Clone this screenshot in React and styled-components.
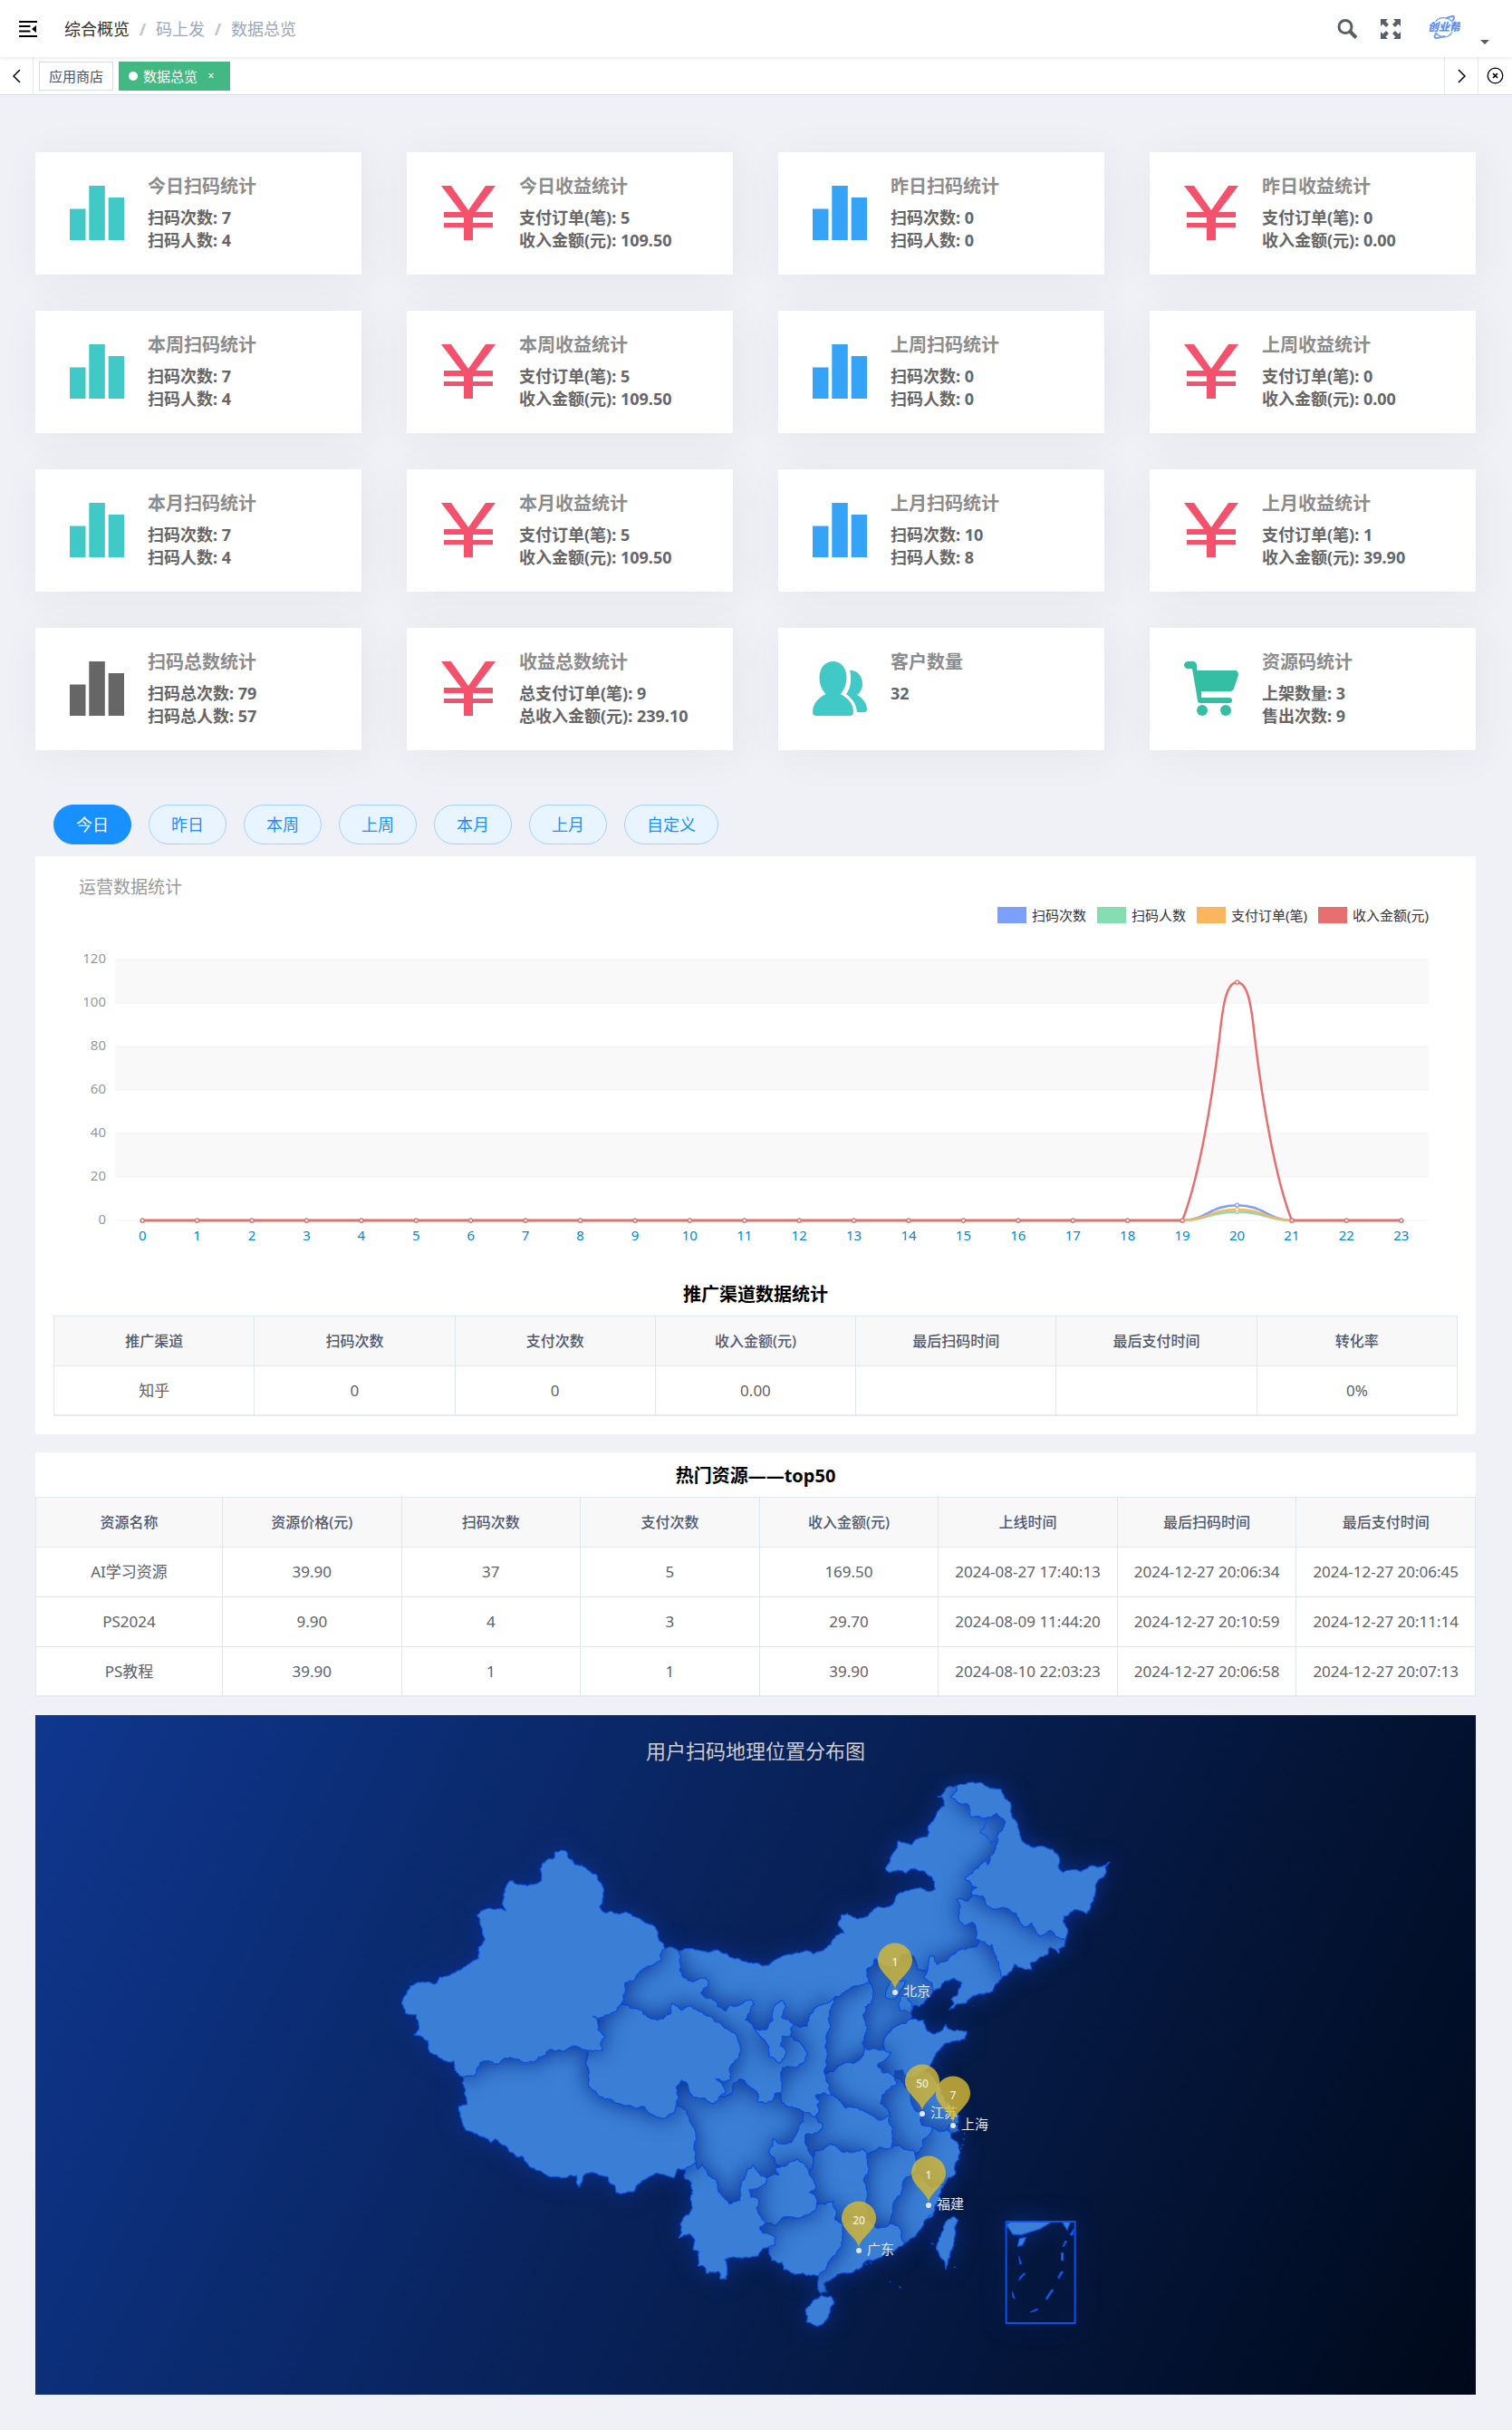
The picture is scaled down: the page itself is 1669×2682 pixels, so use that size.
import React from "react";
import styled, { createGlobalStyle } from "styled-components";

const GlobalStyle = createGlobalStyle`
  *, *::before, *::after { box-sizing: border-box; }
  body {
    margin: 0;
    background: #f0f1f6;
    color: #606266;
    font-family: "Noto Sans", "Noto Sans CJK SC", sans-serif;
    font-size: 17px;
    line-height: 24px;
  }
  h2, h3, p, ul, ol { margin: 0; padding: 0; }
  ul, ol { list-style: none; }
  button { font: inherit; margin: 0; padding: 0; border: 0; background: none; cursor: pointer; }
  a { color: inherit; text-decoration: none; }
  svg { display: block; }
`;

/* ---------- header ---------- */

const TopBar = styled.header`
  position: relative;
  display: flex;
  align-items: center;
  justify-content: space-between;
  height: 63px;
  padding: 0 25px 0 20px;
  background: #fff;
  box-shadow: 0 1px 5px rgba(0, 21, 41, 0.1);
`;

const TopLeft = styled.div`
  display: flex;
  align-items: center;
  gap: 29px;
`;

const TopRight = styled.div`
  display: flex;
  align-items: center;
  height: 100%;
  gap: 26px;
`;

const IconButton = styled.button`
  display: flex;
  align-items: center;
  justify-content: center;
  color: ${(p) => p.$color || "#5a5e66"};
`;

const Crumbs = styled.ol`
  display: flex;
  align-items: center;
  font-size: 18px;
`;

const Crumb = styled.li`
  display: flex;
  color: ${(p) => (p.$root ? "#303133" : "#97a8be")};
  &:not(:first-child)::before {
    content: "/";
    width: 9px;
    margin: 0 10px;
    color: #c0c4cc;
    font-weight: 700;
    text-align: center;
  }
`;

const UserMenu = styled.button`
  display: flex;
  align-items: flex-end;
  gap: 22px;
  height: 34px;
  margin-left: 4px;
`;

const Caret = styled.span`
  border: 5px solid transparent;
  border-top-color: #5a5e66;
  border-bottom-width: 0;
`;

const TagBar = styled.nav`
  display: flex;
  align-items: stretch;
  height: 42px;
  padding-right: 1px;
  background: #fff;
  border-bottom: 1px solid #d8dce5;
`;

const TagArrow = styled.button`
  display: flex;
  align-items: center;
  justify-content: center;
  width: 37px;
  color: #000;
  border-right: ${(p) => (p.$start ? "1px solid #e8e8ec" : 0)};
  border-left: ${(p) => (p.$start ? 0 : "1px solid #e8e8ec")};
`;

const Tags = styled.ul`
  display: flex;
  flex: 1;
  align-items: center;
  gap: 6px;
  padding: 0 6px;
`;

const Tag = styled.li`
  display: flex;
  align-items: center;
  height: 32px;
  padding: 0 10px;
  font-size: 15px;
  color: ${(p) => (p.$active ? "#fff" : "#495060")};
  background: ${(p) => (p.$active ? "#42b983" : "#fff")};
  border: 1px solid ${(p) => (p.$active ? "#42b983" : "#d8dce5")};
`;

const TagDot = styled.span`
  width: 10px;
  height: 10px;
  margin-right: 6px;
  border-radius: 50%;
  background: #fff;
`;

const TagClose = styled.button`
  width: 20px;
  margin-left: 5px;
  color: #fff;
  font-size: 12px;
  line-height: 20px;
`;

/* ---------- statistics cards ---------- */

const Content = styled.main`
  padding: 63px 40px 39px 39px;
`;

const CardGrid = styled.section`
  display: grid;
  grid-template-columns: repeat(4, minmax(0, 1fr));
  gap: 40px 50px;
`;

const Card = styled.article`
  display: flex;
  gap: 26px;
  min-height: 135px;
  padding: 25px 16px 25px 38px;
  background: #fff;
  box-shadow: 5px 5px 50px rgba(0, 0, 0, 0.05);
`;

const CardIcon = styled.svg`
  flex: none;
  width: 60px;
  height: 60px;
  margin-top: 12px;
  fill: ${(p) => p.$color};
`;

const CardTitle = styled.h3`
  margin-bottom: 9px;
  color: #8c8c8c;
  font-size: 20px;
  line-height: 26px;
`;

const CardLine = styled.p`
  color: #666;
  font-size: 18px;
  font-weight: 700;
  line-height: 25px;
`;

/* ---------- period switch ---------- */

const Periods = styled.div`
  display: flex;
  gap: 19px;
  margin: 60px 20px 13px;
`;

const Period = styled.button`
  height: 44px;
  padding: 0 24px;
  border: 1px solid ${(p) => (p.$active ? "#1890ff" : "#a3d3ff")};
  border-radius: 22px;
  background: ${(p) => (p.$active ? "#1890ff" : "#e8f4ff")};
  color: ${(p) => (p.$active ? "#fff" : "#1890ff")};
  font-size: 18px;
`;

/* ---------- panels ---------- */

const Panel = styled.section`
  margin-bottom: 20px;
  background: #fff;
  overflow: hidden;
`;

const ChartTitle = styled.h2`
  padding: 22px 48px 10px;
  color: #999;
  font-size: 19px;
  font-weight: 400;
  line-height: 24px;
`;

const Legend = styled.ul`
  display: flex;
  justify-content: flex-end;
  gap: 12px;
  padding: 0 52px 1px 0;
  color: #333;
  font-size: 15px;
  line-height: 18px;
`;

const LegendItem = styled.li`
  display: flex;
  gap: 6px;
  &::before {
    content: "";
    width: 32px;
    background: ${(p) => p.$color};
  }
`;

const ChartSvg = styled.svg`
  width: 100%;
  height: auto;
  font-size: 15px;
`;

const TableTitle = styled.h2`
  padding: ${(p) => (p.$flush ? "12px 0 9px" : "25px 0 9px")};
  color: #000;
  font-size: 20px;
  line-height: 28px;
  text-align: center;
`;

const TableFrame = styled.div`
  padding: ${(p) => (p.$flush ? "0" : "0 20px 20px")};
`;

const Table = styled.table`
  width: 100%;
  table-layout: fixed;
  border-spacing: 0;
  border-top: 1px solid #dfe6ec;
  border-left: 1px solid #dfe6ec;
  text-align: center;

  th, td {
    height: 55px;
    padding: 0 10px;
    border-right: 1px solid #dfe6ec;
    border-bottom: 1px solid #dfe6ec;
  }
  th {
    background: #f8f8f9;
    color: #515a6e;
    font-size: 16px;
    font-weight: 500;
  }
  tbody tr:last-child td { border-bottom: 2px solid #e6ebf5; }
`;

const FirstCol = styled.col`
  width: ${(p) => p.$width};
`;

const MapPanel = styled.section`
  background: linear-gradient(115deg, #0f378f, #00091a);
  overflow: hidden;
`;

const MapTitle = styled.h2`
  padding: 24px 0 10px;
  color: #ccc;
  font-size: 22px;
  font-weight: 400;
  line-height: 30px;
  text-align: center;
`;

const MapSvg = styled.svg`
  width: 100%;
  height: auto;
`;

/* ---------- icons ---------- */

const ICONS = {
  bars: <path d="M0 25.5h17.5V60H0zM21.3 0h17.5v60H21.3zM42.7 13H60v47H42.7z" />,
  yen: (
    <path d="M0 0h11l19 27L49 0h11L38 29h19v6H35v6h22v5H35v14H25V46H3v-5h22v-6H3v-6h19z" />
  ),
  people: (
    <path d="M22.500 0c8 0 15 6 15 18 0 8-3 14-7 18 8 4 14.500 10 14.500 20 0 3-2 4-4 4H4c-2 0-4-1-4-4 0-10 7-16 14.500-20-4-4-7-10-7-18 0-12 7-18 15-18zM41 10c8-1 14 6 14 15 0 5-2 9-6 12 7 4 11 10 11 16 0 2-1 3-3 3h-8c-1-9-5-15-12-20 4-5 5-10 5-16 0-4 0-7-1-10z" />
  ),
  cart: (
    <>
      <path d="M4 0h6c2 0 4 2 4 4v6h42c3 0 4 2 4 5l-5 15c-1 2-2 3-4 3H19v7h31c2 0 3 1 3 3s-1 3-3 3H18c-2 0-3-1-3-3L9 8H4C2 8 0 6 0 4s2-4 4-4z" />
      <circle cx="20" cy="54" r="6" />
      <circle cx="46" cy="54" r="6" />
    </>
  ),
};

const MenuIcon = () => (
  <svg width="22" height="22" viewBox="0 0 22 22" fill="none" stroke="currentColor" strokeWidth="2">
    <path d="M1 3h20M1 8h12.500M1 13.500h12.500M1 19h20" />
    <path d="M20 7v8l-5-4z" fill="currentColor" stroke="none" />
  </svg>
);

const SearchIcon = () => (
  <svg width="22" height="22" viewBox="0 0 22 22" fill="none" stroke="currentColor">
    <circle cx="9" cy="8.500" r="7" strokeWidth="3" />
    <path d="M14 13.500l7 7" strokeWidth="4" />
  </svg>
);

const ExpandIcon = () => (
  <svg width="22" height="22" viewBox="0 0 22 22" fill="currentColor">
    {[0, 90, 180, 270].map((angle) => (
      <path key={angle} d="M0 0h8L5.500 2.500 9 6 6 9 2.500 5.500 0 8z" transform={`rotate(${angle} 11 11)`} />
    ))}
  </svg>
);

const Chevron = ({ right }) => (
  <svg width="9" height="16" viewBox="0 0 9 16" fill="none" stroke="currentColor" strokeWidth="1.500">
    <path d={right ? "M1 1l7 7-7 7" : "M8 1L1 8l7 7"} />
  </svg>
);

const CloseCircle = () => (
  <svg width="19" height="19" viewBox="0 0 19 19" fill="none" stroke="currentColor" strokeWidth="1.300">
    <circle cx="9.500" cy="9.500" r="8.300" />
    <path d="M7 7l5 5M12 7l-5 5" strokeWidth="1.700" />
  </svg>
);

const LogoSvg = styled.svg`
  align-self: flex-start;
`;

const Logo = () => (
  <LogoSvg width="36" height="30" viewBox="0 0 36 30" role="img" aria-label="创业帮">
    <g fill="none" stroke="#6b9bf8" strokeLinecap="round">
      <path d="M8 10C11 4 21 2 27 9M9 21c5 7 15 6 18-1" strokeWidth="1.300" />
      <path d="M21 5c4-2 8-3 8-1s-1 3-2 5M9 22c-2 3-2 5 1 5s5-1 8-2" strokeWidth="2" />
    </g>
    <text
      x="18"
      y="19"
      textAnchor="middle"
      fontSize="12"
      fontWeight="900"
      fontStyle="italic"
      fill="#5b8ff9"
      stroke="#fff"
      strokeWidth="1.500"
      paintOrder="stroke"
    >
      创业帮
    </text>
  </LogoSvg>
);

/* ---------- data ---------- */

const TEAL = "#40c9c6";
const RED = "#f4516c";
const BLUE = "#36a3f7";

const CARDS = [
  { icon: "bars", color: TEAL, title: "今日扫码统计", lines: ["扫码次数: 7", "扫码人数: 4"] },
  { icon: "yen", color: RED, title: "今日收益统计", lines: ["支付订单(笔): 5", "收入金额(元): 109.50"] },
  { icon: "bars", color: BLUE, title: "昨日扫码统计", lines: ["扫码次数: 0", "扫码人数: 0"] },
  { icon: "yen", color: RED, title: "昨日收益统计", lines: ["支付订单(笔): 0", "收入金额(元): 0.00"] },
  { icon: "bars", color: TEAL, title: "本周扫码统计", lines: ["扫码次数: 7", "扫码人数: 4"] },
  { icon: "yen", color: RED, title: "本周收益统计", lines: ["支付订单(笔): 5", "收入金额(元): 109.50"] },
  { icon: "bars", color: BLUE, title: "上周扫码统计", lines: ["扫码次数: 0", "扫码人数: 0"] },
  { icon: "yen", color: RED, title: "上周收益统计", lines: ["支付订单(笔): 0", "收入金额(元): 0.00"] },
  { icon: "bars", color: TEAL, title: "本月扫码统计", lines: ["扫码次数: 7", "扫码人数: 4"] },
  { icon: "yen", color: RED, title: "本月收益统计", lines: ["支付订单(笔): 5", "收入金额(元): 109.50"] },
  { icon: "bars", color: BLUE, title: "上月扫码统计", lines: ["扫码次数: 10", "扫码人数: 8"] },
  { icon: "yen", color: RED, title: "上月收益统计", lines: ["支付订单(笔): 1", "收入金额(元): 39.90"] },
  { icon: "bars", color: "#666", title: "扫码总数统计", lines: ["扫码总次数: 79", "扫码总人数: 57"] },
  { icon: "yen", color: RED, title: "收益总数统计", lines: ["总支付订单(笔): 9", "总收入金额(元): 239.10"] },
  { icon: "people", color: TEAL, title: "客户数量", lines: ["32"] },
  { icon: "cart", color: "#34bfa3", title: "资源码统计", lines: ["上架数量: 3", "售出次数: 9"] },
];

const PERIODS = ["今日", "昨日", "本周", "上周", "本月", "上月", "自定义"];

const CHANNELS = {
  head: ["推广渠道", "扫码次数", "支付次数", "收入金额(元)", "最后扫码时间", "最后支付时间", "转化率"],
  rows: [["知乎", "0", "0", "0.00", "", "", "0%"]],
};

const RESOURCES = {
  head: ["资源名称", "资源价格(元)", "扫码次数", "支付次数", "收入金额(元)", "上线时间", "最后扫码时间", "最后支付时间"],
  rows: [
    ["AI学习资源", "39.90", "37", "5", "169.50", "2024-08-27 17:40:13", "2024-12-27 20:06:34", "2024-12-27 20:06:45"],
    ["PS2024", "9.90", "4", "3", "29.70", "2024-08-09 11:44:20", "2024-12-27 20:10:59", "2024-12-27 20:11:14"],
    ["PS教程", "39.90", "1", "1", "39.90", "2024-08-10 22:03:23", "2024-12-27 20:06:58", "2024-12-27 20:07:13"],
  ],
};

const SERIES = [
  { name: "扫码次数", color: "#7b9ffb", peak: 7 },
  { name: "扫码人数", color: "#85deb2", peak: 4 },
  { name: "支付订单(笔)", color: "#f9b65f", peak: 5 },
  { name: "收入金额(元)", color: "#e66f6f", peak: 109.5 },
];

/* ---------- line chart ---------- */

const PLOT = { left: 88, right: 1538, top: 39, bottom: 327 };
const BAND = (PLOT.right - PLOT.left) / 24;
const hourX = (h) => PLOT.left + BAND * (h + 0.5);
const valueY = (v) => PLOT.bottom - ((PLOT.bottom - PLOT.top) * v) / 120;

function seriesPath(peak) {
  const base = PLOT.bottom;
  const top = valueY(peak);
  const x0 = hourX(19);
  const x1 = hourX(20);
  const x2 = hourX(21);
  const rise = base - top;
  const start = `M${hourX(0)} ${base}H${x0}`;
  if (peak > 60) {
    const y = (k) => base - rise * k;
    return (
      start +
      `C${x0 + 17} ${y(0.163)} ${x0 + 32} ${y(0.477)} ${x0 + 41} ${y(0.769)}` +
      `C${x0 + 45} ${y(0.92)} ${x1 - 11} ${top} ${x1} ${top}` +
      `C${x1 + 11} ${top} ${x2 - 45} ${y(0.92)} ${x2 - 41} ${y(0.769)}` +
      `C${x2 - 32} ${y(0.477)} ${x2 - 17} ${y(0.163)} ${x2} ${base}H${hourX(23)}`
    );
  }
  return (
    start +
    `C${x0 + 26} ${base} ${x1 - 30} ${top} ${x1} ${top}` +
    `S${x2 - 26} ${base} ${x2} ${base}H${hourX(23)}`
  );
}

function LineChart() {
  const hours = Array.from({ length: 24 }, (_, i) => i);
  return (
    <ChartSvg viewBox="0 0 1590 370" role="img" aria-label="运营数据统计">
      {[120, 80, 40].map((v) => (
        <rect key={v} x={PLOT.left} y={valueY(v)} width={PLOT.right - PLOT.left} height={valueY(0) - valueY(20)} fill="#f9f9f9" />
      ))}
      {[0, 20, 40, 60, 80, 100, 120].map((v) => (
        <g key={v}>
          <path d={`M${PLOT.left} ${valueY(v)}H${PLOT.right}`} stroke="#f3f3f3" />
          <text x="78" y={valueY(v) + 4} textAnchor="end" fill="#999">{v}</text>
        </g>
      ))}
      {hours.map((h) => (
        <text key={h} x={hourX(h)} y="349" textAnchor="middle" fill="#008acd">{h}</text>
      ))}
      {SERIES.map((s) => (
        <g key={s.name} stroke={s.color}>
          <path d={seriesPath(s.peak)} fill="none" strokeWidth="2.500" />
          {hours.map((h) => (
            <circle key={h} cx={hourX(h)} cy={valueY(h === 20 ? s.peak : 0)} r="2" fill="#fff" strokeWidth="1.250" />
          ))}
        </g>
      ))}
    </ChartSvg>
  );
}

/* ---------- map ---------- */

/* Border lines, each drawn once and shared by the regions on both sides. */
const ARCS = {
  xjOut: "-258,632 -278,602 -295,557 -330,541 -370,517 -410,518 -455,514 -475,494 -463,452 -465,426 -485,387 -520,365 -555,355 -580,329 -587,309 -622,312 -630,335 -665,351 -672,368 -667,407 -695,420 -768,407 -797,485 -785,507 -820,502 -882,521 -870,537 -854,602 -875,628 -875,664 -960,713 -1005,726 -1018,749 -1052,744 -1110,771 -1118,787 -1128,806 -1118,845 -1082,849 -1074,901 -1090,917 -1042,938 -1030,979 -1000,996 -958,1004 -948,1042 -924,1057",
  xjTb: "-924,1057 -890,1055 -870,1009 -820,1014 -785,995 -730,1008 -655,986 -640,966 -565,955 -515,970",
  xjQh: "-515,970 -465,970 -473,949 -453,923 -480,901 -484,862 -497,856 -405,817",
  xjGs: "-405,817 -390,745 -358,736 -345,713 -305,689 -270,671 -272,648 -258,632",
  gsOut: "-258,632 -228,631",
  gsNm: "-228,631 -205,693 -210,702 -180,739 -125,728 -115,739 -115,758 -140,778 -90,806 -85,823 -55,839 -40,819 0,814 25,801 37,817 8,869 40,901",
  nmOut: "-228,631 -130,641 -80,638 -55,648 -40,661 -10,667 50,680 68,690 110,668 160,652 235,650 275,630 300,600 335,580 315,548 325,520 345,515 360,525 400,530 435,500 475,495 500,480 510,455 550,440 580,432 637,435 635,410 605,380 565,367 540,382 515,372 485,380 472,365 485,350 498,315 515,275 560,288 612,262 613,240 640,190 668,160 660,130 645,130 670,105 705,95",
  nmHl: "705,95 708,110 688,132 710,147 742,152 755,195 803,200 840,183 870,213 842,260 838,300 810,355 805,343 735,400 760,425 775,430 758,440 760,455",
  hlOut: "705,95 770,85 815,100 855,105 888,155 905,210 930,280 1000,295 1045,325 1060,380 1120,378 1160,357 1215,345 1200,360 1203,380 1183,400 1165,455 1138,517 1095,505 1062,525 1070,560 1070,600",
  hlJl: "760,455 792,457 808,490 855,497 905,515 930,560 958,548 983,592 1020,572 1070,600",
  jlOut: "1070,600 1065,625 1045,632 1047,648 1018,627 1010,650 975,670 952,678 955,702 900,683 875,720 858,727",
  nmJl: "760,455 745,475 707,470 720,490 722,545 735,557 760,545 772,600 780,603",
  jlLn: "780,603 815,625 825,618 840,660 850,700 858,727",
  nmLn: "780,603 778,620 735,635 690,655 643,685 635,660 620,657 612,703",
  lnHe: "612,703 600,728 626,745 630,770",
  lnOut: "630,770 650,765 670,738 700,730 725,745 705,790 690,800 700,815 683,835 740,812 760,790 800,782 858,727",
  nmHe: "612,703 578,700 570,665 550,645 520,655 500,690 465,690 440,665 410,700 418,745",
  heSx: "418,745 430,765 425,815 405,825 397,855 413,895 395,945 403,960",
  heHa: "403,960 470,968",
  heSd: "470,968 465,940 490,905 540,880 557,865",
  heOut: "557,865 557,848 565,820 585,825 612,795 630,770",
  sdOut: "557,865 600,870 610,905 635,915 672,883 700,905 740,905 735,930 700,938 650,970 625,1010 600,1035",
  sdHa: "470,968 490,975 445,1020 460,1040 500,1055",
  sdJs: "500,1055 505,1035 530,1035 545,1060 580,1055 600,1035",
  jsOut: "600,1035 630,1060 655,1110 690,1160 715,1185 715,1205 695,1215 685,1238",
  haAh: "500,1055 512,1080 490,1090 460,1120 455,1145 480,1165 485,1185",
  ahHb: "485,1185 485,1210 492,1290",
  ahJx: "492,1290 515,1283 530,1295 565,1300 570,1315",
  ahZj: "570,1315 595,1290 595,1265 620,1245 628,1225",
  ahJs: "628,1225 590,1215 595,1180 560,1150 555,1115 530,1075 500,1055",
  jsZj: "628,1225 655,1238 675,1230 685,1238",
  zjOut: "685,1238 690,1260 715,1285 715,1330 700,1360 705,1375 680,1390 665,1415",
  zjJx: "570,1315 575,1345 570,1370",
  zjFj: "570,1370 600,1385 620,1420 665,1415",
  fjJx: "570,1370 535,1395 530,1425 510,1455 490,1520 485,1545",
  fjGd: "485,1545 520,1555 525,1590 535,1608",
  fjOut: "665,1415 650,1460 635,1490 630,1515 600,1535 580,1570 560,1590 535,1608",
  gdOut: "535,1608 500,1635 455,1655 410,1665 390,1690 340,1705 290,1730 268,1745 280,1770 258,1775 248,1740 250,1715",
  gdGx: "250,1715 280,1680 315,1630 330,1560 330,1545",
  gdHn: "330,1545 360,1530 415,1530 430,1545",
  gdJx: "430,1545 440,1555 485,1545",
  jxHn: "430,1545 410,1490 413,1450 400,1400 418,1360 412,1330 412,1310",
  jxHb: "492,1290 450,1290 425,1305 412,1310",
  hnHb: "412,1310 398,1295 355,1305 290,1278 240,1300 232,1325",
  hnCq: "232,1325 230,1350 218,1372",
  hnGz: "218,1372 235,1400 238,1430 220,1440 240,1450 245,1480",
  hnGx: "245,1480 270,1480 300,1470 310,1500 305,1530 330,1545",
  gxGz: "245,1480 240,1500 205,1515 145,1520 110,1550 75,1540",
  cqGz: "218,1372 205,1345 180,1328 150,1345 130,1352",
  scGz: "130,1352 105,1360 120,1380 80,1392",
  gzYn: "80,1392 75,1412 20,1430 25,1455 50,1460 45,1490 60,1520 75,1540",
  ynGx: "75,1540 55,1555 65,1575 108,1590 105,1615 85,1620",
  gxOut: "85,1620 95,1665 130,1670 135,1695 170,1710 225,1715 250,1715",
  ynOut: "85,1620 65,1625 50,1650 30,1652 -20,1656 -60,1662 -55,1727 -75,1727 -80,1701 -120,1708 -125,1688 -150,1682 -145,1636 -165,1630 -170,1582 -212,1591 -208,1545 -172,1500 -170,1409 -190,1396 -190,1363",
  ynTb: "-190,1363 -170,1350 -155,1337",
  ynSc: "-155,1337 -150,1363 -135,1344 -115,1383 -90,1396 -60,1461 -45,1478 -10,1467 -10,1428 10,1383 35,1350 45,1365 60,1385 80,1392",
  tbOut: "-924,1057 -930,1077 -915,1129 -912,1148 -942,1155 -930,1207 -920,1230 -880,1246 -835,1275 -820,1262 -785,1285 -750,1320 -730,1320 -710,1350 -660,1376 -600,1392 -550,1383 -542,1422 -530,1389 -505,1374 -445,1389 -440,1409 -425,1415 -420,1439 -360,1435 -340,1409 -290,1376 -230,1392 -215,1361 -190,1363",
  tbSc: "-155,1337 -160,1272 -170,1214 -185,1168 -220,1148",
  tbQh: "-220,1148 -225,1174 -260,1194 -290,1187 -325,1155 -370,1152 -430,1135 -480,1118 -512,1083 -510,1038 -520,1012 -515,970",
  qhSc: "-220,1148 -215,1129 -220,1090 -202,1068 -185,1077 -165,1122 -95,1145 -78,1122",
  qhGs: "-78,1122 -58,1109 -90,1064 -40,1064 -45,1031 -8,973 -25,914 -70,884 -110,856 -145,840 -170,823 -200,836 -235,814 -237,843 -265,865 -330,849 -335,836 -370,830 -405,817",
  gsSc: "-78,1122 -55,1119 -35,1109 -30,1077 -10,1064 20,1087 45,1105 50,1140 75,1145 100,1135 105,1112 125,1110",
  gsSn: "125,1110 130,1075 125,1050 130,1028 175,1028 207,1005 205,965 157,922",
  gsNx: "40,901 60,925 82,950 85,990 122,1010 140,985 143,970 125,955 130,922 157,922",
  nxSn: "157,922 158,895 168,883",
  nmNx: "40,901 78,900 100,870 105,822 130,803 143,825 128,858 168,883",
  nmSn: "168,883 185,892 212,890 222,850 255,820 300,798",
  nmSx: "300,798 320,790 360,760 418,745",
  snSx: "300,798 293,825 282,865 290,890 275,925 278,990 270,1045",
  sxHa: "270,1045 320,1020 360,1010 395,990 403,960",
  snHa: "270,1045 285,1080 290,1110 300,1118",
  haHb: "300,1118 315,1130 340,1160 380,1160 410,1175 450,1200 485,1185",
  snHb: "300,1118 240,1118 255,1135 245,1150 250,1175 240,1190",
  snCq: "240,1190 200,1172",
  snSc: "200,1172 160,1155 128,1138 125,1110",
  cqHb: "240,1190 265,1215 250,1240 210,1245 205,1275 215,1300 232,1325",
  cqSc: "200,1172 200,1205 185,1220 175,1250 160,1275 140,1280 100,1262 85,1305 105,1325 110,1345 130,1352",
  bj: "485,745 505,735 540,740 530,760 520,780 500,798 470,790 475,770 485,745",
  tj: "522,790 545,790 560,815 555,845 520,838 518,810 522,790",
  sh: "683,1215 710,1215 717,1235 690,1245 680,1235 683,1215",
  hi: "235,1795 290,1782 300,1810 283,1850 245,1883 210,1868 207,1830 235,1795",
  tw: "695,1520 713,1530 700,1600 685,1655 672,1693 668,1668 643,1630 650,1590 665,1550 695,1520",
  pocket: "803,200 797,235 785,248 805,255 820,283 838,275",
};

/* The lines round each region. Later regions cast their glow over earlier ones. */
const REGIONS = [
  ["河北", "nmHe heSx heHa heSd heOut lnHe"],
  ["北京", "bj"],
  ["天津", "tj"],
  ["山西", "heSx sxHa snSx nmSx"],
  ["内蒙古", "nmOut nmHl nmJl nmLn nmHe nmSx nmSn nmNx gsNm"],
  ["辽宁", "nmLn lnHe lnOut jlLn"],
  ["吉林", "hlJl jlOut jlLn nmJl"],
  ["黑龙江", "hlOut hlJl nmHl"],
  ["江苏", "sdJs jsOut jsZj ahJs"],
  ["上海", "sh"],
  ["浙江", "jsZj zjOut zjFj zjJx ahZj"],
  ["安徽", "haAh ahHb ahJx ahZj ahJs"],
  ["福建", "zjFj fjOut fjGd fjJx"],
  ["江西", "ahJx zjJx fjJx gdJx jxHn jxHb"],
  ["山东", "sdOut sdJs sdHa heSd"],
  ["河南", "heHa sdHa haAh haHb snHa sxHa"],
  ["湖北", "haHb ahHb jxHb hnHb cqHb snHb"],
  ["湖南", "hnHb hnCq hnGz hnGx gdHn jxHn"],
  ["广东", "gdHn gdJx fjGd gdOut gdGx"],
  ["广西", "hnGx gdGx gxOut ynGx gxGz"],
  ["海南", "hi"],
  ["四川", "gsSc snSc cqSc scGz ynSc tbSc qhSc"],
  ["重庆", "snCq cqSc cqGz hnCq cqHb"],
  ["贵州", "cqGz scGz gzYn gxGz hnGz"],
  ["云南", "ynSc gzYn ynGx ynOut ynTb"],
  ["西藏", "xjTb tbQh tbSc ynTb tbOut"],
  ["陕西", "nmSn snSx snHa snHb snCq snSc gsSn nxSn"],
  ["甘肃", "gsOut gsNm gsNx gsSn gsSc qhGs xjGs"],
  ["青海", "xjQh qhGs qhSc tbQh"],
  ["宁夏", "nmNx nxSn gsNx"],
  ["新疆", "xjOut xjTb xjQh xjGs"],
  ["台湾", "tw"],
];

function noise(a, b) {
  const n = Math.sin(a[0] * 12.9898 + a[1] * 78.233 + b[0] * 37.719 + b[1] * 4.581) * 43758.5453;
  return (n - Math.floor(n)) * 2 - 1;
}

function crinkle(a, b) {
  const dx = b[0] - a[0];
  const dy = b[1] - a[1];
  if (Math.hypot(dx, dy) < 9) return [b];
  const k = noise(a, b) * 0.17;
  const mid = [(a[0] + b[0]) / 2 - dy * k, (a[1] + b[1]) / 2 + dx * k];
  return [...crinkle(a, mid), ...crinkle(mid, b)];
}

const LINES = Object.fromEntries(
  Object.entries(ARCS).map(([name, text]) => {
    const pts = text.split(" ").map((p) => p.split(",").map(Number));
    return [name, pts.reduce((out, p, i) => (i ? out.concat(crinkle(pts[i - 1], p)) : [p]), [])];
  })
);

const gapBetween = (a, b) => Math.hypot(a[0] - b[0], a[1] - b[1]);

/* Chains the named lines end to end, turning each one to meet the last. */
function regionPath(names) {
  const lines = names.split(" ").map((n) => LINES[n]);
  let ring = lines[0];
  if (lines.length > 1) {
    const end = ring[ring.length - 1];
    const next = lines[1];
    const touches = Math.min(gapBetween(end, next[0]), gapBetween(end, next[next.length - 1]));
    if (touches > 1) ring = [...ring].reverse();
  }
  lines.slice(1).forEach((line) => {
    const end = ring[ring.length - 1];
    const flip = gapBetween(end, line[0]) > gapBetween(end, line[line.length - 1]);
    ring = ring.concat(flip ? [...line].reverse() : line);
  });
  return "M" + ring.map((p) => p.map((v) => v.toFixed(1)).join(" ")).join("L") + "Z";
}

const PLACES = [
  { name: "北京", value: 1, x: 949, y: 306 },
  { name: "江苏", value: 50, x: 979, y: 440 },
  { name: "上海", value: 7, x: 1013, y: 453 },
  { name: "福建", value: 1, x: 986, y: 541 },
  { name: "广东", value: 20, x: 909, y: 591 },
];

function ChinaMap() {
  return (
    <MapSvg viewBox="0 64 1590 686" role="img" aria-label="用户扫码地理位置分布图">
      <defs>
        <filter id="glow" x="-150%" y="-150%" width="400%" height="400%" colorInterpolationFilters="sRGB">
          <feDropShadow dx="0" dy="0" stdDeviation="36" floodColor="#092f8f" />
        </filter>
      </defs>
      <g transform="translate(781 47) scale(0.333333)" stroke="#0a53e9" strokeWidth="3.500" strokeLinejoin="round">
        {REGIONS.map(([name, lines]) => (
          <path key={name} d={regionPath(lines)} fill="#3a7fd5" filter="url(#glow)" />
        ))}
        <path d={"M" + LINES.pocket.map((p) => p.join(" ")).join("L")} fill="none" />
        <g filter="url(#glow)" fill="#3a7fd5">
          <path d="M872 1546l16-10h136l-40 24-62 20-28-2zM1058 1538h26l-10 26zM916 1592l22-4-12 26-16 4zM1084 1580l12-20-4 20zM1060 1618l8-18 4 2-10 16zM1055 1640h6v24h-6zM914 1652l8 22-4 2zM934 1708l-20 22 4-10 12-12zM1060 1702l-14 22-2-4 10-18zM892 1768l8 22-6-4zM1028 1762l-22 32-2-4 18-28zM952 1836l24-12-4 6z" />
          <path d="M872 1536h228v336H872z" fill="none" strokeWidth="6" />
        </g>
        <path d="M735 1243l-2 4M728 1262l6 2M724 1280l8 4M720 1294l6-2M486 1734l4 2M516 1750l8 6M622 1608l10 2M698 1686l6 2M740 811l2 2M760 821h2M404 1672l8 8M420 1668l6 8M612 1520l12-8" fill="none" />
      </g>
      {PLACES.map((p) => (
        <g key={p.name} transform={`translate(${p.x} ${p.y})`} textAnchor="middle">
          <text x="9" y="4" fontSize="15" textAnchor="start" fill="#e3e8f2">{p.name}</text>
          <circle r="3" fill="#e3e8f2" />
          <path d="M0-3C-1-14-19-22-19-35.500A19 19 0 0 1 19-35.500C19-22 1-14 0-3z" fill="#d6b833" fillOpacity="0.820" />
          <text y="-29" fontSize="12" fontWeight="500" fill="#f2eed8">{p.value}</text>
        </g>
      ))}
    </MapSvg>
  );
}

/* ---------- page ---------- */

function DataTable({ data, firstWidth }) {
  return (
    <Table>
      <colgroup>
        <FirstCol $width={firstWidth} />
      </colgroup>
      <thead>
        <tr>{data.head.map((h) => <th key={h} scope="col">{h}</th>)}</tr>
      </thead>
      <tbody>
        {data.rows.map((row) => (
          <tr key={row[0]}>{row.map((cell, i) => <td key={i}>{cell}</td>)}</tr>
        ))}
      </tbody>
    </Table>
  );
}

export default function App() {
  const [period, setPeriod] = React.useState("今日");
  return (
    <>
      <GlobalStyle />
      <TopBar>
        <TopLeft>
          <IconButton $color="#000" aria-label="收起菜单"><MenuIcon /></IconButton>
          <Crumbs>
            <Crumb $root><a href="#overview">综合概览</a></Crumb>
            <Crumb>码上发</Crumb>
            <Crumb>数据总览</Crumb>
          </Crumbs>
        </TopLeft>
        <TopRight>
          <IconButton aria-label="搜索"><SearchIcon /></IconButton>
          <IconButton aria-label="全屏"><ExpandIcon /></IconButton>
          <UserMenu aria-label="用户菜单">
            <Logo />
            <Caret />
          </UserMenu>
        </TopRight>
      </TopBar>
      <TagBar>
        <TagArrow $start aria-label="向左"><Chevron /></TagArrow>
        <Tags>
          <Tag><a href="#store">应用商店</a></Tag>
          <Tag $active>
            <TagDot />
            <a href="#data">数据总览</a>
            <TagClose aria-label="关闭">×</TagClose>
          </Tag>
        </Tags>
        <TagArrow aria-label="向右"><Chevron right /></TagArrow>
        <TagArrow aria-label="关闭全部"><CloseCircle /></TagArrow>
      </TagBar>
      <Content>
        <CardGrid>
          {CARDS.map((card) => (
            <Card key={card.title}>
              <CardIcon viewBox="0 0 60 60" $color={card.color} aria-hidden="true">{ICONS[card.icon]}</CardIcon>
              <div>
                <CardTitle>{card.title}</CardTitle>
                {card.lines.map((line) => <CardLine key={line}>{line}</CardLine>)}
              </div>
            </Card>
          ))}
        </CardGrid>
        <Periods>
          {PERIODS.map((name) => (
            <Period key={name} $active={name === period} onClick={() => setPeriod(name)}>{name}</Period>
          ))}
        </Periods>
        <Panel>
          <ChartTitle>运营数据统计</ChartTitle>
          <Legend>
            {SERIES.map((s) => <LegendItem key={s.name} $color={s.color}>{s.name}</LegendItem>)}
          </Legend>
          <LineChart />
          <TableTitle>推广渠道数据统计</TableTitle>
          <TableFrame>
            <DataTable data={CHANNELS} firstWidth="auto" />
          </TableFrame>
        </Panel>
        <Panel>
          <TableTitle $flush>热门资源——top50</TableTitle>
          <TableFrame $flush>
            <DataTable data={RESOURCES} firstWidth="206px" />
          </TableFrame>
        </Panel>
        <MapPanel>
          <MapTitle>用户扫码地理位置分布图</MapTitle>
          <ChinaMap />
        </MapPanel>
      </Content>
    </>
  );
}
